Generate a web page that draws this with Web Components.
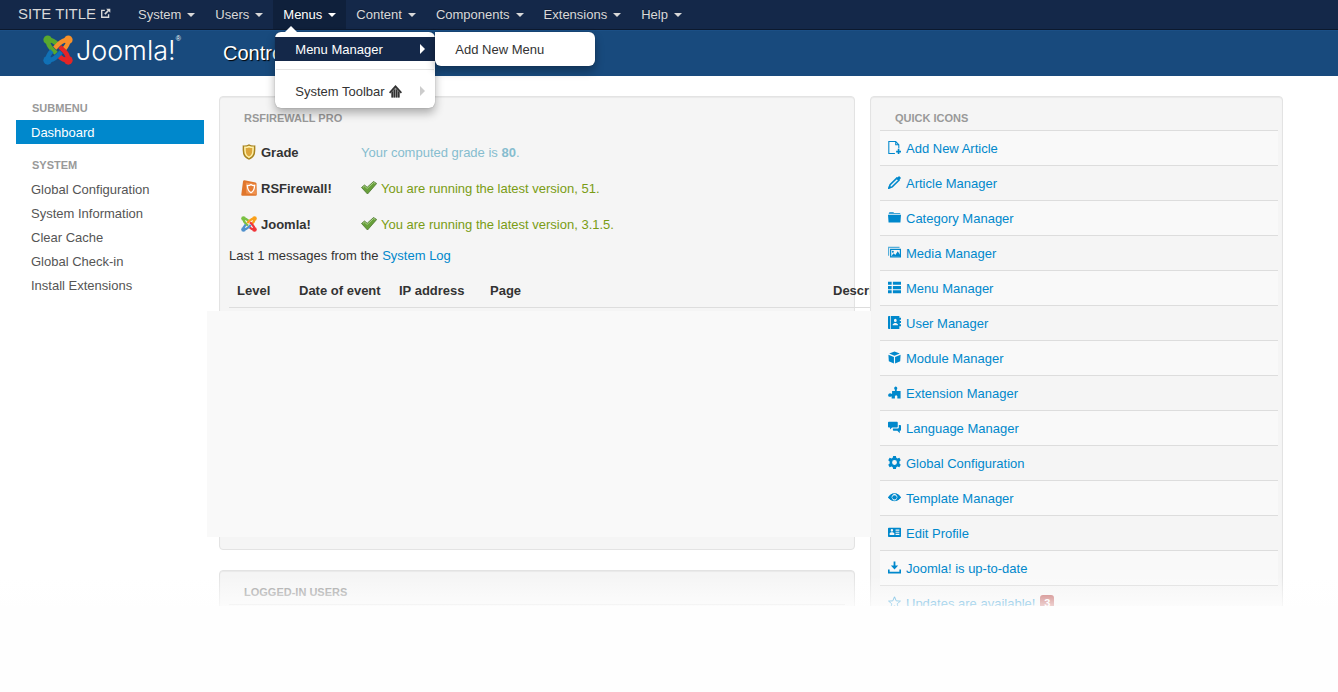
<!DOCTYPE html>
<html lang="en">
<head>
<meta charset="utf-8">
<title>Control Panel</title>
<style>
html, body { margin: 0; }
body { background: #fefefe; color: #333; font: 13px/18px "Liberation Sans", Arial, sans-serif; overflow: hidden; }
</style>
</head>
<body>
<admin-page></admin-page>
<script>
const define = (name, html) => customElements.define(name, class extends HTMLElement {
  constructor() {
    super();
    this.attachShadow({ mode: 'open' });
  }
  connectedCallback() {
    if (this.shadowRoot.childNodes.length) return;
    const t = document.createElement('template');
    t.innerHTML = typeof html === 'function' ? html(this) : html;
    this.shadowRoot.append(t.content.cloneNode(true));
  }
});

const joomlaMark = (a, b, c, d) => {
  const arm = (colour, turn) => `<g transform="rotate(${turn} 16 16)" stroke="${colour}" fill="none" stroke-width="4.8"><circle cx="5" cy="5" r="4.6" fill="${colour}" stroke="none"/><path d="M5 5C5 9.500 7 12.500 9.500 15L14 19.500"/><path d="M5 5C9.500 4.800 12.500 7 15 9.500"/></g>`;
  return arm(a, 0) + arm(b, 90) + arm(c, 180) + arm(d, 270);
};

const icons = {
  external: ['0 0 16 16', '<path d="M7 3.5H2.5v10h10V9" fill="none" stroke="currentColor" stroke-width="2"/><path d="M9 1h6v6l-2.200-2.200L8 9.800 6.200 8 11 3.200z"/>'],
  home: ['0 0 16 16', '<path d="M8 0L16 9 14.500 10.500 8 3.500 1.500 10.500 0 9z"/><path d="M3 8h2v7.500H3zM5.800 5.500h1.700v10H5.800zM8.500 5.500h1.700v10H8.500zM11 8h2v7.500h-2z"/><path d="M8 3L3 8v7.500h10V8z" opacity=".5"/>'],
  fileadd: ['0 0 16 16', '<path d="M8.500 15.300H1V.700h8.500L13.300 4.500V9M9.500 1v3.700h3.500" fill="none" stroke="currentColor" stroke-width="1.300"/><path d="M12 9.500h2V12h2v2h-2v2h-2v-2h-2v-2h2z"/>'],
  pencil: ['0 0 16 16', '<path d="M1.200 14.800l1.400-4L10.800 2.600l2.600 2.600-8.200 8.200z" fill="none" stroke="currentColor" stroke-width="1.900"/><path d="M10.500 2.500L13 .500q.600-.600 1.300 0l1.200 1.200q.600.700 0 1.300l-2 2.500zM0 16l1.500-4.500 3 3z"/>'],
  folder: ['0 0 16 16', '<path d="M1 3.500V2.500l1-1h4.500l1 1H15v1zM0 4.500h16l-.700 9.500H.700z"/>'],
  picture: ['0 0 16 16', '<path d="M.700 12V1.700h13.500" fill="none" stroke="currentColor" stroke-width="1.400" opacity=".65"/><path d="M2.500 3.500H16V14H2.500zM4 5v7.500h10.500V5z" fill-rule="evenodd"/><circle cx="6" cy="7" r="1.200"/><path d="M4 12.500l3-3.500 2 2 3-4.500 3 4.500v2z"/>'],
  list: ['0 0 16 16', '<path d="M0 1h4.500v3.700H0zM6 1h10v3.700H6zM0 6.300h4.500V10H0zM6 6.300h10V10H6zM0 11.500h4.500v3.700H0zM6 11.500h10v3.700H6z"/>'],
  address: ['0 0 16 16', '<path d="M1 0h1.500v16H1Q0 16 0 15V1Q0 0 1 0zM3.400 0H14v2h2v2.500h-1.500V6H16v2.500h-1.500V10H16v2.500h-2V16H3.400zM7.300 5.500a1.700 2 0 1 0 3.400 0 1.700 2 0 1 0-3.400 0M5.800 11.500h6.400V10L10 8.500H8L5.800 10z" fill-rule="evenodd"/>'],
  cube: ['0 0 16 16', '<path d="M8 .500L14.500 3 8 5.800 1.500 3zM.500 4.500L7.300 7.300V15.500L1 12.500zM15.500 4.500L8.700 7.300V15.500L15 12.500z"/>'],
  puzzle: ['0 0 16 16', '<path d="M5 6h3.500V4.500Q7 3 8 1.500 9.500-.500 11 1.500 12 3 10.700 4.500V6H15.500V15.500H11.500V12.500Q10 10.500 8.500 12.500V15.500H4.500V12.500Q2.500 14 .700 12.800 -.500 11 1 9.500 2.500 8.500 5 9.800z"/>'],
  comments: ['0 0 16 16', '<path d="M1 1h10q1 0 1 1v5q0 1-1 1H5L2.500 10.500V8H1Q0 8 0 7V2Q0 1 1 1z"/><path d="M13.300 5H15q1 0 1 1v5q0 1-1 1h-.500v3L11.500 12H7q-1 0-1-1V9.300h6q1.300 0 1.300-1.300z"/>'],
  cog: ['0 0 16 16', '<path d="M6.300 0h3.400l.500 2.300 1.300.800L14 2.300l1.700 2.900L14 6.700v2.600l1.700 1.500L14 13.700l-2.500-.800-1.300.800-.500 2.300H6.300L5.800 13.700l-1.300-.800-2.500.800L.300 10.800 2 9.300V6.700L.300 5.200 2 2.300l2.500.800 1.300-.800zM8 5a3 3 0 1 0 0 6 3 3 0 1 0 0-6" fill-rule="evenodd"/>'],
  eye: ['0 0 16 16', '<path d="M0 8Q8-2.500 16 8 8 17 0 8zM8 3.800a4 4 0 1 0 0 8 4 4 0 1 0 0-8" fill-rule="evenodd"/><circle cx="8" cy="7.800" r="2.700"/><path d="M0 8Q3 3.500 7 3.200L4 7.500 7 12.500Q3 12 0 8zM16 8Q13 3.500 9 3.200L12 7.500 9 12.500Q13 12 16 8z"/>'],
  card: ['0 0 16 16', '<path d="M1 2h14q1 0 1 1v9.500q0 1-1 1H1q-1 0-1-1V3Q0 2 1 2zM3.300 5.300a1.500 1.700 0 1 0 3 0 1.500 1.700 0 1 0-3 0M2 11h5.800V9L6 7.800H3.500L2 9zM9.300 4.300v1.500H14V4.300zM9.300 7v1.300H14V7zM9.300 9.500V11H14V9.500z" fill-rule="evenodd"/>'],
  download: ['0 0 16 16', '<path d="M6.900.500h2.200V5.500H12.500L8 10.500 3.500 5.500H6.900z"/><path d="M0 10.500h2V13.300H14V10.500h2V15.500H0z"/>'],
  star: ['0 0 16 16', '<path d="M8 1l2.100 5 5.200.300-4 3.300 1.400 5.300L8 12l-4.700 2.900 1.400-5.300-4-3.300L5.900 6z" fill="none" stroke="currentColor" stroke-width="1.200"/>'],
  shield: ['0 0 16 16', '<path d="M8 .300q3 1.700 6.300 1 .300 5.200-.400 8.700Q12.500 14.200 8 15.700 3.500 14.200 2.100 10 1.400 6.500 1.700 1.300q3.300.700 6.300-1z" fill="#a8841f"/><path d="M8 1.700q2.500 1 4.900.900.100 4-.500 7Q11.500 13 8 14.300 4.500 13 3.600 9.600 3 6.600 3.100 2.600q2.400.100 4.900-.900z" fill="#fff0a8"/><path d="M8 3.500q1.700.700 3.300.600.100 3-.400 5.200Q10.300 11.500 8 12.500 5.700 11.500 5.100 9.300 4.600 7 4.700 4.100q1.600.100 3.300-.600z" fill="#dca63b"/>'],
  rsf: ['0 0 16 16', '<path d="M2 1.500q.300-1.500 1.500-1.300L14.500 2.500q1 .200 1 1.200l.300 10.800q0 1.200-1.200 1.200H1.300Q.200 15.700.300 14.500z" fill="#e0762c"/><path d="M4.800 2.500l9.700 1.500.500 10.500-9.800-1z" fill="#f0924f"/><path d="M10 4.500q1.500 1.200 3.600 1-.200 5.500-3.600 7.200Q6.600 11 6.300 5.500q2.200.200 3.700-1z" fill="#e47a32" stroke="#fff" stroke-width="1.300"/>'],
  joomla: ['0 0 32 32', joomlaMark('#7ac143', '#f9a01b', '#f0353a', '#5091cd')],
  joomlabig: ['0 0 32 32', joomlaMark('#59a82d', '#f7902a', '#e32526', '#1171b6')],
  tick: ['0 0 16 16', '<path d="M.500 7.500L3.500 5 6.200 7.300 12.500 1.500 15.700 3.500 6.500 14z" fill="#68a03a" stroke="#4b7530" stroke-width=".8" stroke-linejoin="round"/><path d="M1.800 7.500l1.700-1.400 2.700 2.300L12.600 2.500l1.700 1" fill="none" stroke="#a9cf88" stroke-width="1"/>']
};
define('ui-icon', el => {
  const [box, body] = icons[el.getAttribute('name')];
  const size = el.getAttribute('size') || 13;
  return `<style>:host{display:inline-flex;flex:none;width:${size}px;height:${size}px}svg{width:100%;height:100%}</style><svg viewBox="${box}" fill="currentColor" aria-hidden="true">${body}</svg>`;
});

define('nav-item', el => `
<style>
:host { display: block; position: relative; }
a { display: flex; align-items: center; gap: 6px; height: 29px; padding: 0 10px; color: #d9d9d9; text-decoration: none; text-shadow: 0 -1px 0 rgba(0,0,0,.25); }
a::after { content: ""; border: 4px solid transparent; border-top-color: currentColor; border-bottom: 0; margin-top: 1px; }
:host([open]) a { background: #0f203b; color: #fff; }
</style>
<a href="#">${el.getAttribute('label')}</a><slot></slot>`);

define('drop-menu', `
<style>
:host { position: absolute; top: 32px; left: 2px; z-index: 10; width: 160px; padding: 5px 0; box-sizing: border-box; background: #fff; border-radius: 6px; box-shadow: 0 0 1px rgba(0,0,0,.4), 0 5px 10px rgba(0,0,0,.3); }
:host([nested]) { top: 0; left: 160px; border-radius: 0 6px 6px 6px; }
:host(:not([nested]))::before { content: ""; position: absolute; top: -6px; left: 10px; border: 6px solid transparent; border-top: 0; border-bottom-color: #fff; }
</style><slot></slot>`);

define('menu-entry', `
<style>
:host { display: block; }
a { display: flex; align-items: center; gap: 4px; height: 24px; padding: 0 10px 0 20px; color: #333; text-decoration: none; white-space: nowrap; }
span { padding-top: 2px; }
:host([active]) a { background: #142849; color: #fff; }
:host([parent]) a::after { content: ""; border: 5px solid transparent; border-left-color: #ccc; border-right: 0; margin-left: auto; }
:host([active]) a::after { border-left-color: #fff; }
</style><a href="#"><span><slot></slot></span><slot name="icon"></slot></a><slot name="sub"></slot>`);

define('menu-divider', `<style>:host{display:block;height:1px;margin:8px 1px 9px;background:#e5e5e5}</style>`);

define('top-bar', `
<style>
:host { display: block; background: #142849; border-bottom: 1px solid #0c192e; }
nav { display: flex; height: 29px; padding-left: 18px; }
.site { display: flex; align-items: center; gap: 4px; width: 110px; box-sizing: border-box; padding-bottom: 2px; color: #d9d9d9; font-size: 15px; text-decoration: none; white-space: nowrap; }
</style>
<nav>
<a class="site" href="#">SITE TITLE <ui-icon name="external" size="11"></ui-icon></a>
<nav-item label="System"></nav-item>
<nav-item label="Users"></nav-item>
<nav-item label="Menus" open>
  <drop-menu>
    <menu-entry active parent>Menu Manager<drop-menu nested slot="sub"><menu-entry>Add New Menu</menu-entry></drop-menu></menu-entry>
    <menu-divider></menu-divider>
    <menu-entry parent>System Toolbar<ui-icon slot="icon" name="home" size="13"></ui-icon></menu-entry>
  </drop-menu>
</nav-item>
<nav-item label="Content"></nav-item>
<nav-item label="Components"></nav-item>
<nav-item label="Extensions"></nav-item>
<nav-item label="Help"></nav-item>
</nav>`);

define('title-bar', `
<style>
:host { display: flex; height: 46px; padding-left: 43px; color: #fff; background: #184a7d; box-shadow: inset 0 1px 0 #1b4f85; }
.logo { display: flex; width: 180px; gap: 3px; padding-top: 5px; box-sizing: border-box; }
.word { font: 300 27px/32px Inter, Lato, sans-serif; white-space: nowrap; }
sup { font: 7px/8px "Liberation Sans", sans-serif; vertical-align: top; }
h1 { margin: 0; font-size: 20px; font-weight: 400; line-height: 46px; text-shadow: 1px 1px 1px #000; }
</style>
<div class="logo"><ui-icon name="joomlabig" size="30"></ui-icon><span class="word">Joomla!<sup>®</sup></span></div>
<h1>Control</h1>`);

define('side-nav', `
<style>
:host { display: block; }
h2 { margin: 0; padding: 0 16px; font-size: 11px; line-height: 24px; color: #999; text-transform: uppercase; }
ul { margin: 0 0 9px; padding: 0; list-style: none; }
a { display: block; padding: 2px 15px 0; line-height: 22px; color: #555; text-decoration: none; }
a.on { background: #08c; color: #fff; }
</style>
<nav>
<h2>Submenu</h2>
<ul><li><a class="on" href="#">Dashboard</a></li></ul>
<h2>System</h2>
<ul>
<li><a href="#">Global Configuration</a></li>
<li><a href="#">System Information</a></li>
<li><a href="#">Clear Cache</a></li>
<li><a href="#">Global Check-in</a></li>
<li><a href="#">Install Extensions</a></li>
</ul>
</nav>`);

define('app-panel', el => `
<style>
:host { display: block; box-sizing: border-box; padding: 9px; background: #f5f5f5; border: 1px solid #e3e3e3; border-radius: 4px; box-shadow: inset 0 1px 1px rgba(0,0,0,.05); }
h2 { margin: 0; padding: 0 15px; font-size: 11px; line-height: 24px; color: #999; text-transform: uppercase; }
</style>
<h2>${el.getAttribute('heading')}</h2><slot></slot>`);

define('firewall-status', `
<style>
:host { display: block; }
table { border-collapse: collapse; text-align: left; white-space: nowrap; }
.status { margin: 5px 0 0 12px; }
.status tr { height: 36px; }
.status th, .status td { padding: 0; }
.status th { width: 120px; }
.line { display: flex; align-items: center; gap: 4px; }
.line ui-icon { margin-bottom: 2px; }
.grade { color: #86bdcf; }
.ok { color: #7a9c14; }
p { margin: 4px 0 8px; }
p a { color: #08c; text-decoration: none; }
.log { table-layout: fixed; width: 644px; border-bottom: 1px solid #ddd; }
.log th { box-sizing: border-box; padding: 9px 0 7px 8px; line-height: 18px; }
.c1 { width: 62px; } .c2 { width: 100px; } .c3 { width: 91px; } .c4 { width: 343px; }
.rows { position: relative; z-index: 1; height: 226px; margin: 3px -26px 3px -22px; background: #f9f9f9; }
</style>
<table class="status">
<tr><th scope="row"><span class="line"><ui-icon name="shield" size="16"></ui-icon>Grade</span></th><td class="grade">Your computed grade is <b>80</b>.</td></tr>
<tr><th scope="row"><span class="line"><ui-icon name="rsf" size="16"></ui-icon>RSFirewall!</span></th><td class="ok"><span class="line"><ui-icon name="tick" size="16"></ui-icon>You are running the latest version, 51.</span></td></tr>
<tr><th scope="row"><span class="line"><ui-icon name="joomla" size="16"></ui-icon>Joomla!</span></th><td class="ok"><span class="line"><ui-icon name="tick" size="16"></ui-icon>You are running the latest version, 3.1.5.</span></td></tr>
</table>
<p>Last 1 messages from the <a href="#">System Log</a></p>
<table class="log"><thead><tr><th class="c1">Level</th><th class="c2">Date of event</th><th class="c3">IP address</th><th class="c4">Page</th><th>Descri</th></tr></thead></table>
<div class="rows"></div>`);

define('logged-users', `<style>:host{display:block;height:60px;border-top:1px solid #ddd}</style>`);

define('quick-link', el => `
<style>
:host { display: block; border-top: 1px solid #ddd; }
:host(:nth-child(odd)) { background: #f9f9f9; }
a { display: flex; align-items: center; gap: 5px; height: 34px; padding: 0 8px; color: #08c; text-decoration: none; }
ui-icon { margin-bottom: 2px; }
span { padding-top: 2px; }
b { padding: 0 4px; background: #b94a48; color: #fff; border-radius: 3px; font-size: 11px; line-height: 16px; }
</style>
<a href="#"><ui-icon name="${el.getAttribute('icon')}"></ui-icon><span><slot></slot></span>${el.hasAttribute('count') ? `<b>${el.getAttribute('count')}</b>` : ''}</a>`);

define('admin-page', `
<style>
:host { display: flex; flex-direction: column; position: relative; height: calc(100vh - 86px); overflow: hidden; background: #fff; }
:host::after { content: ""; position: absolute; inset: auto 0 0 0; z-index: 5; height: 30px; background: linear-gradient(rgba(254,254,254,0), rgba(254,254,254,.75)); pointer-events: none; }
top-bar, title-bar { flex: none; }
main { display: grid; grid-template-columns: 188fr 636fr 413fr; gap: 15px; align-items: start; padding: 20px 55px 0 16px; }
main > * { min-width: 0; }
.stack { display: grid; grid-template-columns: minmax(0, 1fr); gap: 20px; }
.quick { position: relative; z-index: 0; padding-right: 4px; }
</style>
<top-bar></top-bar>
<title-bar></title-bar>
<main>
<side-nav></side-nav>
<div class="stack">
<app-panel heading="RSFirewall PRO"><firewall-status></firewall-status></app-panel>
<app-panel heading="Logged-in Users"><logged-users></logged-users></app-panel>
</div>
<app-panel class="quick" heading="Quick Icons">
<quick-link icon="fileadd">Add New Article</quick-link>
<quick-link icon="pencil">Article Manager</quick-link>
<quick-link icon="folder">Category Manager</quick-link>
<quick-link icon="picture">Media Manager</quick-link>
<quick-link icon="list">Menu Manager</quick-link>
<quick-link icon="address">User Manager</quick-link>
<quick-link icon="cube">Module Manager</quick-link>
<quick-link icon="puzzle">Extension Manager</quick-link>
<quick-link icon="comments">Language Manager</quick-link>
<quick-link icon="cog">Global Configuration</quick-link>
<quick-link icon="eye">Template Manager</quick-link>
<quick-link icon="card">Edit Profile</quick-link>
<quick-link icon="download">Joomla! is up-to-date</quick-link>
<quick-link icon="star" count="3">Updates are available!</quick-link>
</app-panel>
</main>`);
</script>
</body>
</html>
